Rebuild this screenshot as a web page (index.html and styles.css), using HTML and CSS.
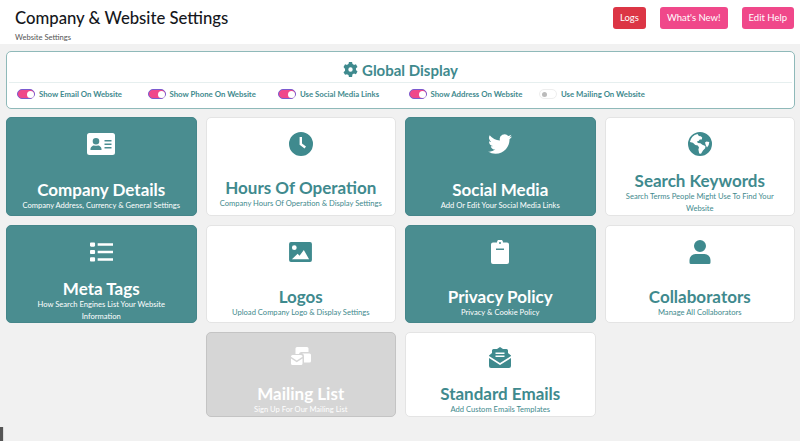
FILE: index.html
```html
<!DOCTYPE html>
<html lang="en">
<head>
<meta charset="UTF-8">
<meta name="viewport" content="width=device-width, initial-scale=1.0">
<title>Company &amp; Website Settings</title>
<link rel="stylesheet" href="styles.css">
</head>
<body>
    <header class="page-header">
        <div class="page-titles">
            <h1>Company &amp; Website Settings</h1>
            <div class="crumb">Website Settings</div>
        </div>
        <div class="header-buttons">
            <a class="btn btn-red">Logs</a>
            <a class="btn btn-pink">What's New!</a>
            <a class="btn btn-pink">Edit Help</a>
        </div>
    </header>

    <section class="global-panel">
        <h2 class="global-title">
            <svg class="gear" viewBox="0 0 24 24"><path fill-rule="evenodd" d="M9.500 0h5l.7 3.300a9 9 0 0 1 2.300 1.300l3.200-1.100 2.500 4.300-2.500 2.300a9 9 0 0 1 0 2.800l2.500 2.300-2.500 4.300-3.200-1.100a9 9 0 0 1-2.300 1.300L14.500 24h-5l-.7-3.300a9 9 0 0 1-2.300-1.300l-3.200 1.100-2.500-4.300 2.500-2.300a9 9 0 0 1 0-2.800L.8 7.800l2.500-4.300 3.200 1.100a9 9 0 0 1 2.300-1.300zM12 8.500a3.500 3.500 0 1 0 0 7 3.500 3.500 0 0 0 0-7z"/></svg>
            Global Display
        </h2>
        <div class="toggles">
            <label class="toggle-item"><span class="switch on"></span>Show Email On Website</label>
            <label class="toggle-item"><span class="switch on"></span>Show Phone On Website</label>
            <label class="toggle-item"><span class="switch on"></span>Use Social Media Links</label>
            <label class="toggle-item"><span class="switch on"></span>Show Address On Website</label>
            <label class="toggle-item"><span class="switch"></span>Use Mailing On Website</label>
        </div>
    </section>

    <main class="card-grid">
        <a class="card teal">
            <svg class="icon" viewBox="0 0 28 22"><path fill-rule="evenodd" d="M2.500 0h23A2.500 2.500 0 0 1 28 2.500v17a2.500 2.500 0 0 1-2.500 2.500h-23A2.500 2.500 0 0 1 0 19.500v-17A2.500 2.500 0 0 1 2.500 0zM9 5a3.300 3.300 0 1 0 0 6.600A3.300 3.300 0 0 0 9 5zM3.500 17h11c.4-3-2-4.600-3.500-4.600-1.300.5-2.700.5-4 0-1.500 0-3.900 1.600-3.500 4.600zM17.500 7v1.500h7V7zm0 3.500V12h7v-1.500zm0 3.500v1.500h7V14z"/></svg>
            <div class="card-text">
                <h3>Company Details</h3>
                <p>Company Address, Currency &amp; General Settings</p>
            </div>
        </a>
        <a class="card raised">
            <svg class="icon" viewBox="0 0 24 24"><path fill-rule="evenodd" d="M12 0a12 12 0 1 1 0 24 12 12 0 0 1 0-24zM10.600 5v7.700l5 3.700 1.400-2-4-3V5z"/></svg>
            <div class="card-text">
                <h3>Hours Of Operation</h3>
                <p>Company Hours Of Operation &amp; Display Settings</p>
            </div>
        </a>
        <a class="card teal">
            <svg class="icon" viewBox="0 0 24 24"><path d="M24 4.600a10 10 0 0 1-2.800.8 5 5 0 0 0 2.200-2.700 10 10 0 0 1-3.100 1.200 4.900 4.900 0 0 0-8.400 4.500A14 14 0 0 1 1.700 3.200a4.900 4.900 0 0 0 1.500 6.600 5 5 0 0 1-2.200-.6 4.900 4.900 0 0 0 3.900 4.900 5 5 0 0 1-2.200.1 4.900 4.900 0 0 0 4.600 3.400A10 10 0 0 1 0 19.600a14 14 0 0 0 7.500 2.200c9 0 14-7.500 14-14v-.6A10 10 0 0 0 24 4.600z"/></svg>
            <div class="card-text">
                <h3>Social Media</h3>
                <p>Add Or Edit Your Social Media Links</p>
            </div>
        </a>
        <a class="card wrapped">
            <svg class="icon" viewBox="0 0 24 24"><path fill-rule="evenodd" d="M12 0a12 12 0 1 1 0 24 12 12 0 0 1 0-24zM9.500 2a10.400 10.400 0 0 0-7.600 8l3 .8 2.400 2.200 2.500.4 1.200 2-.6 2 .8 4 1.800.3 2-3.300 2.200-2.200.2-2.300-3-1.200-2-1.500-2.500-.2-1-1.500 1.700-.4 1.200-1.500 2-.2.400-2-1.500-1.200-1.800-.2zM18.500 9.500l-1.500 1 .8 2.800 1.200 2.200 1.700-2.500.6-3z"/></svg>
            <div class="card-text">
                <h3>Search Keywords</h3>
                <p>Search Terms People Might Use To Find Your Website</p>
            </div>
        </a>

        <a class="card teal wrapped-low">
            <svg class="icon icon-sm" viewBox="0 0 24 20"><path d="M1.200 0h2.900c.7 0 1.200.5 1.200 1.200v2c0 .7-.5 1.200-1.200 1.200H1.200C.5 4.400 0 3.900 0 3.200v-2C0 .5.500 0 1.200 0zm0 7.800h2.900c.7 0 1.200.5 1.200 1.200v2c0 .7-.5 1.200-1.200 1.200H1.200C.5 12.200 0 11.700 0 11V9c0-.7.500-1.200 1.200-1.200zm0 7.800h2.900c.7 0 1.200.5 1.200 1.200v2c0 .7-.5 1.200-1.200 1.200H1.200C.5 20 0 19.500 0 18.800v-2c0-.7.500-1.200 1.200-1.200zM8 .9h16v2.600H8zm0 7.800h16v2.600H8zm0 7.800h16v2.600H8z"/></svg>
            <div class="card-text">
                <h3>Meta Tags</h3>
                <p>How Search Engines List Your Website Information</p>
            </div>
        </a>
        <a class="card row-two">
            <svg class="icon icon-sm" viewBox="0 0 24 21"><path fill-rule="evenodd" d="M2 0h20a2 2 0 0 1 2 2v17a2 2 0 0 1-2 2H2a2 2 0 0 1-2-2V2a2 2 0 0 1 2-2zm3.500 3.500a2.500 2.500 0 1 0 0 5 2.500 2.500 0 0 0 0-5zM3 18h18l-5.500-9.500-4.500 6-2-2.200z"/></svg>
            <div class="card-text">
                <h3>Logos</h3>
                <p>Upload Company Logo &amp; Display Settings</p>
            </div>
        </a>
        <a class="card teal row-two">
            <svg class="icon" viewBox="0 0 18 24"><path fill-rule="evenodd" d="M6 2.500a3 3 0 0 1 6 0h4a2 2 0 0 1 2 2V22a2 2 0 0 1-2 2H2a2 2 0 0 1-2-2V4.500a2 2 0 0 1 2-2zM9 2a1 1 0 1 0 0 2 1 1 0 0 0 0-2zM5 8.500V10h8V8.500z"/></svg>
            <div class="card-text">
                <h3>Privacy Policy</h3>
                <p>Privacy &amp; Cookie Policy</p>
            </div>
        </a>
        <a class="card row-two">
            <svg class="icon" viewBox="0 0 21 24"><path d="M10.500 0a6 6 0 1 1 0 12 6 6 0 0 1 0-12zM6 14h9a6 6 0 0 1 6 6v2.500a1.500 1.500 0 0 1-1.500 1.500h-18A1.500 1.500 0 0 1 0 22.500V20a6 6 0 0 1 6-6z"/></svg>
            <div class="card-text">
                <h3>Collaborators</h3>
                <p>Manage All Collaborators</p>
            </div>
        </a>

        <a class="card disabled start-2 row-three">
            <svg class="icon icon-mailing" viewBox="0 0 20 18"><path d="M6 0h10a1.500 1.500 0 0 1 1.500 1.500V5h-7A2.500 2.500 0 0 0 8 7H4.500V1.500A1.500 1.500 0 0 1 6 0zM11 6.500h7.500A1.500 1.500 0 0 1 20 8v6a1.500 1.500 0 0 1-1.500 1.500H13V9a2.500 2.500 0 0 0-2-2.500zM1.500 8h8.500A1.500 1.500 0 0 1 11.500 9.500v.3L5.750 13.500 0 9.800v-.3A1.500 1.500 0 0 1 1.500 8zM0 11.500l5.750 3.700 5.750-3.700v5A1.500 1.500 0 0 1 10 18H1.500A1.500 1.500 0 0 1 0 16.500z"/></svg>
            <div class="card-text">
                <h3>Mailing List</h3>
                <p>Sign Up For Our Mailing List</p>
            </div>
        </a>
        <a class="card row-three">
            <svg class="icon icon-mail" viewBox="0 0 22 21"><path fill-rule="evenodd" d="M0 8.500l3-2.400V3.500A1.500 1.500 0 0 1 4.500 2H8l3-2 3 2h3.500A1.500 1.500 0 0 1 19 3.500v2.600l3 2.400v.6l-11 7-11-7zM6.500 5.500V7h9V5.500zm0 3V10h9V8.500zM0 11l11 7 11-7v8a2 2 0 0 1-2 2H2a2 2 0 0 1-2-2z"/></svg>
            <div class="card-text">
                <h3>Standard Emails</h3>
                <p>Add Custom Emails Templates</p>
            </div>
        </a>
    </main>
    <div class="window-corner"></div>
</body>
</html>
```

FILE: styles.css
```css
* {
    box-sizing: border-box;
}
body {
    position: relative;
    font-family: Lato, "Open Sans", sans-serif;
    margin: 0;
    height: 441px;
    overflow: hidden;
    background-color: #f1f1f1;
}
.page-header {
    display: flex;
    justify-content: space-between;
    height: 44px;
    padding: 7px 6px 0 15px;
    background-color: #fff;
}
.page-header h1 {
    margin: 0;
    font-size: 16.700px;
    font-weight: 500;
    line-height: 22px;
    color: #15171c;
}
.crumb {
    margin-top: 2px;
    font-size: 7.600px;
    line-height: 12px;
    color: #555;
}
.header-buttons {
    display: flex;
    gap: 14px;
}
.btn {
    height: 22px;
    padding: 0 7px;
    font-size: 9.500px;
    line-height: 22px;
    color: #fff;
    border-radius: 3px;
}
.btn-red {
    background-color: #dc3545;
}
.btn-pink {
    background-color: #f0488a;
}
.global-panel {
    height: 58px;
    margin: 7px 5px 0 6px;
    background-color: #fff;
    border: 1px solid #8fb9b9;
    border-radius: 5px;
}
.global-title {
    display: flex;
    justify-content: center;
    align-items: center;
    gap: 4px;
    height: 31px;
    margin: 0 2px;
    padding-top: 5px;
    font-size: 15px;
    font-weight: 700;
    color: #3f8a8e;
    border-bottom: 1px solid #e6efef;
}
.gear {
    width: 15px;
    height: 15px;
    fill: #3f8a8e;
}
.toggles {
    display: flex;
    padding: 6px 0 0 10px;
}
.toggle-item {
    display: flex;
    align-items: center;
    gap: 4px;
    width: 130.500px;
    font-size: 7.800px;
    font-weight: 700;
    color: #3f8a8e;
}
.switch {
    position: relative;
    width: 18px;
    height: 10px;
    background-color: #fff;
    border: 1px solid #eee;
    border-radius: 5px;
}
.switch::after {
    content: "";
    position: absolute;
    left: 2px;
    top: 2px;
    width: 5px;
    height: 5px;
    background-color: #bbb;
    border-radius: 50%;
}
.switch.on {
    background-color: #f0488a;
    border-color: #7a5bd0;
}
.switch.on::after {
    left: 9px;
    top: 1px;
    width: 7px;
    height: 7px;
    background-color: #fff;
}
.card-grid {
    display: grid;
    grid-template-columns: repeat(4, 1fr);
    grid-template-rows: 98.500px 98.500px 85px;
    gap: 9px;
    margin: 8px 5px 0 6px;
}
.card {
    display: flex;
    flex-direction: column;
    justify-content: space-between;
    align-items: center;
    padding: 14px 12px 4px;
    text-align: center;
    color: #3f8a8e;
    background-color: #fff;
    border: 1px solid #e4e4e4;
    border-radius: 5px;
}
.icon {
    height: 24px;
    width: 28px;
    fill: #3f8a8e;
}
.icon-sm {
    width: 23px;
    height: 20px;
    margin-top: 2px;
}
.icon-mail {
    width: 22px;
    height: 21px;
}
.icon-mailing {
    width: 20px;
    height: 18px;
}
.card-text h3 {
    margin: 0;
    font-size: 17px;
    font-weight: 700;
    line-height: 19px;
}
.card-text p {
    margin: 0;
    font-size: 7.600px;
    line-height: 12px;
}
.card.teal {
    color: #fff;
    background-color: #4a8d90;
    border-color: #45868a;
}
.card.teal .icon,
.card.disabled .icon {
    fill: #fff;
}
.card.raised {
    padding-bottom: 6px;
}
.card.wrapped {
    padding-bottom: 1px;
}
.card.wrapped-low {
    padding-bottom: 0;
}
.card.row-two {
    padding-bottom: 4px;
}
.card.row-three {
    padding-bottom: 1px;
}
.card.disabled {
    color: #fff;
    background-color: #d6d6d6;
    border-color: #c4c4c4;
}
.start-2 {
    grid-column-start: 2;
}
.window-corner {
    position: absolute;
    left: 0;
    bottom: 0;
    width: 4px;
    height: 14px;
    background-color: #555;
    border-right: 1px solid #ddd;
}
```
